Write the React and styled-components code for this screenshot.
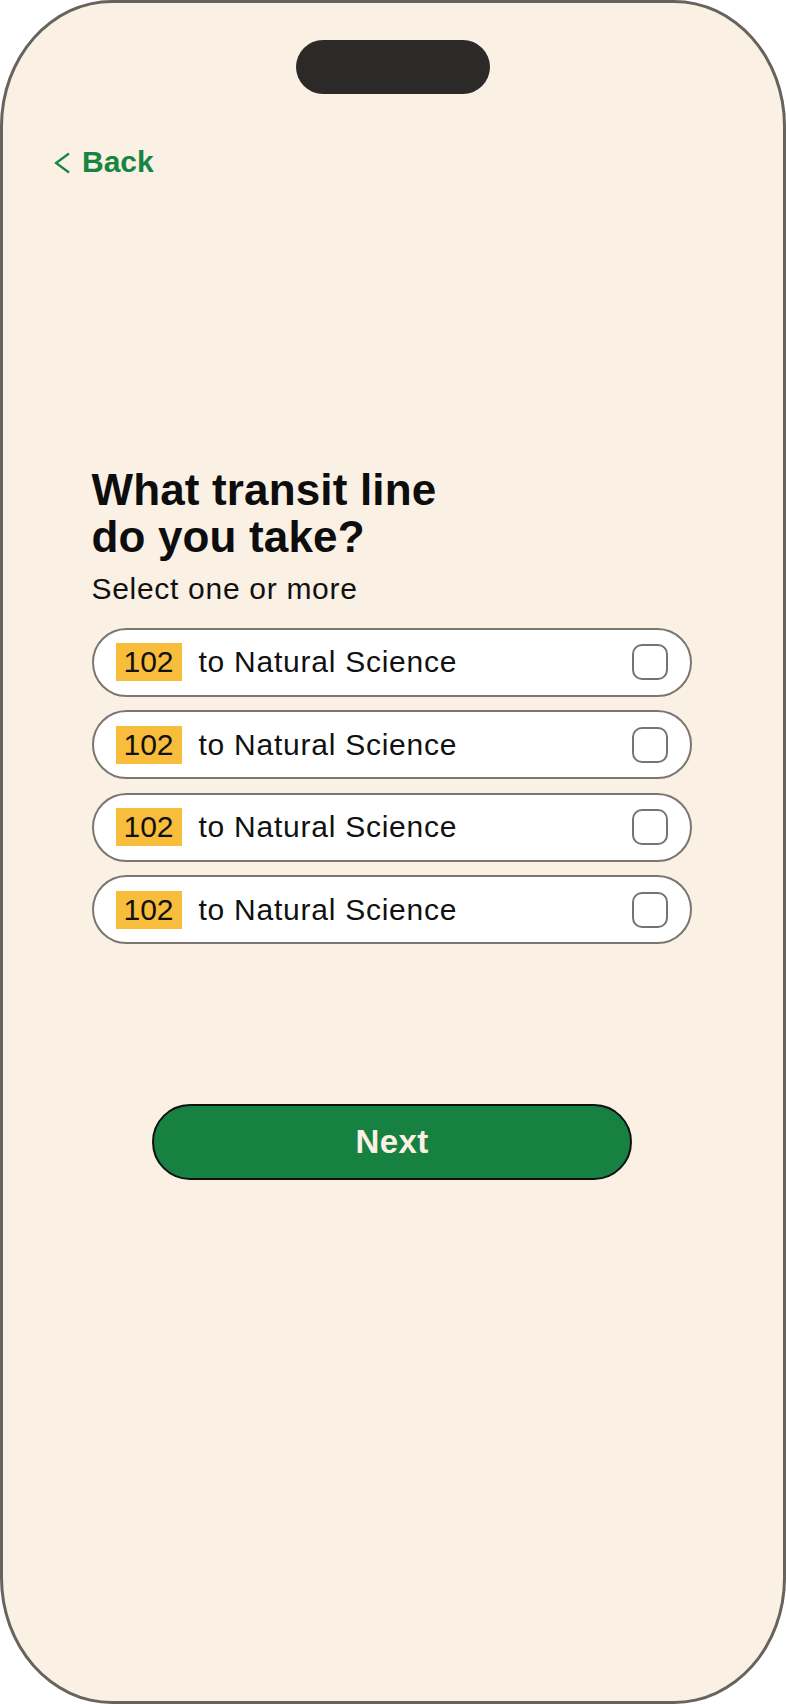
import styled, { createGlobalStyle } from "styled-components";

const GlobalStyle = createGlobalStyle`
  html, body {
    margin: 0;
    padding: 0;
    background: #ffffff;
  }
  * {
    box-sizing: border-box;
  }
`;

const lines = [
  { num: "102", dest: "to Natural Science" },
  { num: "102", dest: "to Natural Science" },
  { num: "102", dest: "to Natural Science" },
  { num: "102", dest: "to Natural Science" },
];

const App = () => {
  return (
    <>
      <GlobalStyle />
      <Phone>
        <Island />
        <BackLink>
          <svg width="18" height="24" viewBox="0 0 18 24" fill="none">
            <polyline
              points="16,2.5 3,12 16,21.5"
              stroke="#178541"
              strokeWidth="2.2"
              fill="none"
            />
          </svg>
          <span>Back</span>
        </BackLink>
        <Content>
          <Title>
            What transit line
            <br />
            do you take?
          </Title>
          <Subtitle>Select one or more</Subtitle>
          <Options>
            {lines.map((line, idx) => (
              <Option key={idx}>
                <Badge>{line.num}</Badge>
                <Dest>{line.dest}</Dest>
                <Check />
              </Option>
            ))}
          </Options>
        </Content>
        <NextButton>Next</NextButton>
      </Phone>
    </>
  );
};

const Phone = styled.div`
  width: 786px;
  height: 1704px;
  border: 3.5px solid #67635d;
  border-radius: 112px / 126px;
  background: #faf0e4;
  display: flex;
  flex-direction: column;
  font-family: "Liberation Sans", Arial, sans-serif;
  overflow: hidden;
`;

const Island = styled.div`
  align-self: center;
  width: 194px;
  height: 54px;
  margin-top: 36.5px;
  border-radius: 27px;
  background: #2b2a29;
`;

const BackLink = styled.a`
  display: flex;
  align-items: center;
  gap: 11px;
  margin-top: 50px;
  margin-left: 50px;
  height: 36px;
  color: #178541;
  font-size: 30px;
  font-weight: 700;
  line-height: 36px;
  cursor: pointer;
  svg {
    margin-top: 2px;
  }
`;

const Content = styled.div`
  display: flex;
  flex-direction: column;
  margin-top: 286px;
  padding-left: 88.5px;
`;

const Title = styled.h1`
  margin: 0;
  font-size: 44px;
  font-weight: 700;
  line-height: 47px;
  letter-spacing: 0.15px;
  color: #0d0d0d;
`;

const Subtitle = styled.p`
  margin: 11px 0 0;
  font-size: 30px;
  line-height: 36px;
  letter-spacing: 0.7px;
  color: #111111;
`;

const Options = styled.div`
  display: flex;
  flex-direction: column;
  gap: 13.5px;
  margin-top: 21px;
  width: 600px;
`;

const Option = styled.label`
  display: flex;
  align-items: center;
  height: 69px;
  padding: 0 22px 0 22px;
  border: 2px solid #7b7770;
  border-radius: 35px;
  background: #ffffff;
  cursor: pointer;
`;

const Badge = styled.span`
  display: flex;
  align-items: center;
  justify-content: center;
  width: 66px;
  height: 38px;
  background: #f8bd3a;
  font-size: 30px;
  color: #111111;
`;

const Dest = styled.span`
  flex: 1;
  margin-left: 17px;
  font-size: 30px;
  letter-spacing: 0.75px;
  color: #111111;
`;

const Check = styled.span`
  width: 36px;
  height: 36px;
  border: 2px solid #777470;
  border-radius: 10px;
  background: #ffffff;
`;

const NextButton = styled.button`
  align-self: center;
  width: 480px;
  height: 76px;
  margin-top: 160px;
  margin-right: 2px;
  border: 2px solid #111111;
  border-radius: 38px;
  background: #168141;
  color: #fbf0e3;
  font-family: "Liberation Sans", Arial, sans-serif;
  font-size: 33px;
  font-weight: 700;
  letter-spacing: 0.4px;
  cursor: pointer;
`;

export default App;
